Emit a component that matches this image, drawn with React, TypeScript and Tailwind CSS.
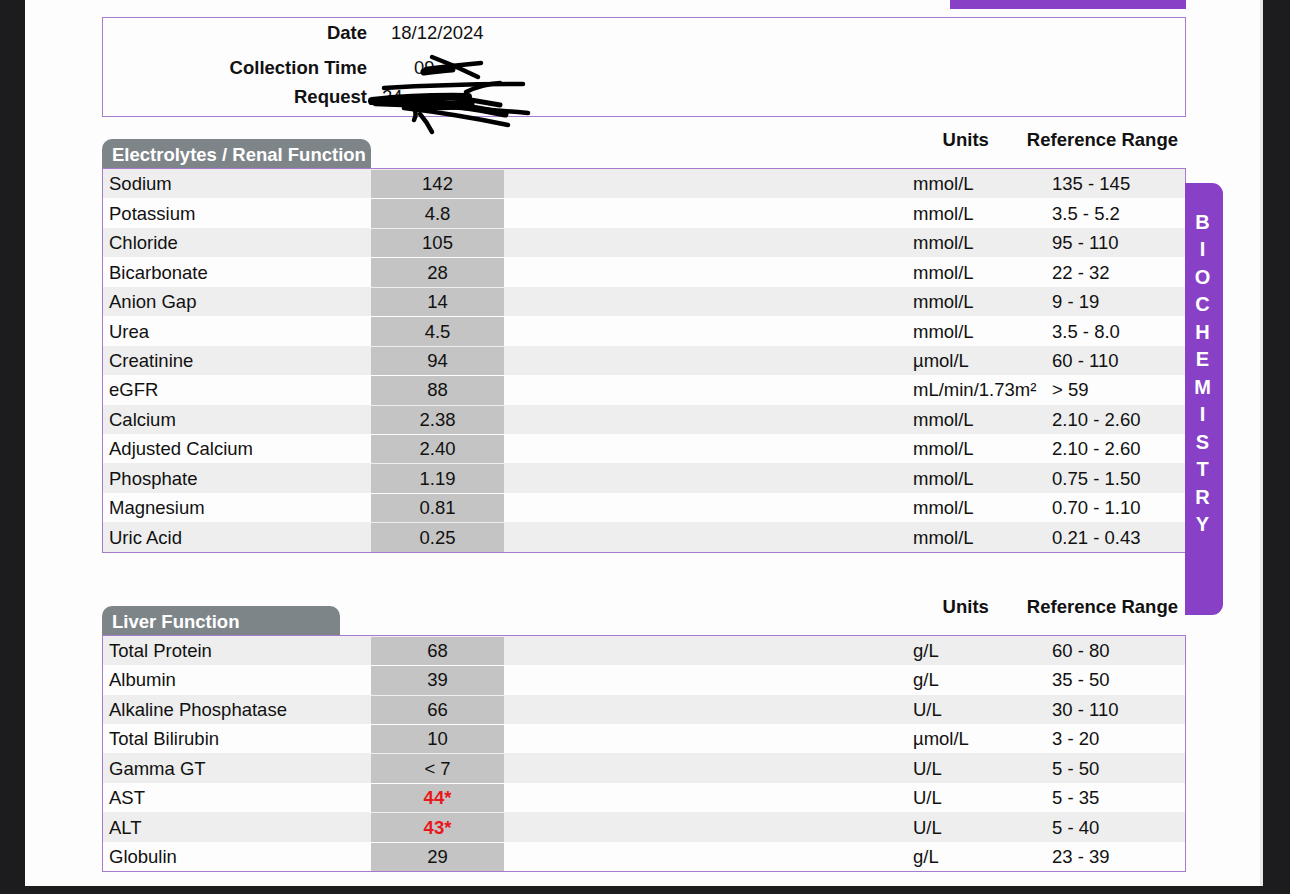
import * as React from 'react';

type Row = {
  name: string;
  value: string;
  units: React.ReactNode;
  range: string;
  flag?: boolean;
};

const electrolytes: Row[] = [
  { name: 'Sodium', value: '142', units: 'mmol/L', range: '135 - 145' },
  { name: 'Potassium', value: '4.8', units: 'mmol/L', range: '3.5 - 5.2' },
  { name: 'Chloride', value: '105', units: 'mmol/L', range: '95 - 110' },
  { name: 'Bicarbonate', value: '28', units: 'mmol/L', range: '22 - 32' },
  { name: 'Anion Gap', value: '14', units: 'mmol/L', range: '9 - 19' },
  { name: 'Urea', value: '4.5', units: 'mmol/L', range: '3.5 - 8.0' },
  { name: 'Creatinine', value: '94', units: 'µmol/L', range: '60 - 110' },
  { name: 'eGFR', value: '88', units: 'mL/min/1.73m²', range: '> 59' },
  { name: 'Calcium', value: '2.38', units: 'mmol/L', range: '2.10 - 2.60' },
  { name: 'Adjusted Calcium', value: '2.40', units: 'mmol/L', range: '2.10 - 2.60' },
  { name: 'Phosphate', value: '1.19', units: 'mmol/L', range: '0.75 - 1.50' },
  { name: 'Magnesium', value: '0.81', units: 'mmol/L', range: '0.70 - 1.10' },
  { name: 'Uric Acid', value: '0.25', units: 'mmol/L', range: '0.21 - 0.43' },
];

const liver: Row[] = [
  { name: 'Total Protein', value: '68', units: 'g/L', range: '60 - 80' },
  { name: 'Albumin', value: '39', units: 'g/L', range: '35 - 50' },
  { name: 'Alkaline Phosphatase', value: '66', units: 'U/L', range: '30 - 110' },
  { name: 'Total Bilirubin', value: '10', units: 'µmol/L', range: '3 - 20' },
  { name: 'Gamma GT', value: '< 7', units: 'U/L', range: '5 - 50' },
  { name: 'AST', value: '44*', units: 'U/L', range: '5 - 35', flag: true },
  { name: 'ALT', value: '43*', units: 'U/L', range: '5 - 40', flag: true },
  { name: 'Globulin', value: '29', units: 'g/L', range: '23 - 39' },
];

const SectionHeader = ({ title, tabWidth }: { title: string; tabWidth: string }) => (
  <div className="flex items-start">
    <div
      className={`${tabWidth} mt-[11px] h-[29px] rounded-t-[10px] bg-[#7e8589] pl-[10px] overflow-hidden whitespace-nowrap text-[18.5px] leading-[32px] font-bold text-white`}
    >
      {title}
    </div>
    <div className="flex-1" />
    <div className="flex pr-[8px] text-[18.5px] leading-[24px] font-bold text-[#111]">
      <span>Units</span>
      <span className="ml-[38px]">Reference Range</span>
    </div>
  </div>
);

const ResultsTable = ({ rows }: { rows: Row[] }) => (
  <div className="border border-[#a47ccb]">
    {rows.map((r, i) => (
      <div
        key={r.name}
        className={`flex h-[29.45px] items-center pt-[1px] text-[18.5px] text-[#111] ${i % 2 === 0 ? 'bg-[#eeeeee]' : 'bg-[#fdfdfd]'}`}
      >
        <div className="w-[268px] pl-[6px]">{r.name}</div>
        <div
          className={`flex h-full w-[133px] items-center justify-center bg-[#c4c4c4] ${r.flag ? 'font-bold text-[#e8191d]' : ''}`}
        >
          {r.value}
        </div>
        <div className="flex-1" />
        <div className="w-[139px] pl-[6px] whitespace-nowrap">{r.units}</div>
        <div className="w-[139px] pl-[6px]">{r.range}</div>
      </div>
    ))}
  </div>
);

// redaction marks over the collection time and request number
const Scribble = () => (
  <svg
    className="pointer-events-none absolute left-0 top-0"
    width="560"
    height="140"
    viewBox="0 0 560 140"
  >
    <g fill="none" stroke="#000" strokeLinecap="round" strokeWidth="4.5">
      <path d="M426 69 Q450 66 481 63" />
      <path d="M432 57 Q456 66 478 77" />
      <path d="M424 72 Q440 70 452 69" strokeWidth="7" />
      <path d="M384 88 Q450 84 523 84" />
      <path d="M372 101 Q420 96 468 97" strokeWidth="8" />
      <path d="M375 104 Q450 106 528 113" />
      <path d="M398 98 Q455 104 505 114" strokeWidth="7" />
      <path d="M404 108 Q455 114 508 125" />
      <path d="M420 114 Q427 122 432 132" />
      <path d="M466 92 Q482 84 500 83" />
      <path d="M390 100 Q430 109 470 104" strokeWidth="9" />
      <path d="M412 105 Q418 113 414 120" />
      <path d="M440 96 Q470 99 500 105" strokeWidth="5" />
    </g>
  </svg>
);

const InfoBox = () => (
  <div className="relative h-[100px] border border-[#a47ccb] text-[18.5px] leading-[24px] text-[#111]">
    <div className="flex pt-[3px]">
      <div className="w-[264px] text-right font-bold">Date</div>
      <div className="pl-[24px]">18/12/2024</div>
    </div>
    <div className="mt-[11px] flex">
      <div className="w-[264px] text-right font-bold">Collection Time</div>
      <div className="pl-[47px]">09</div>
    </div>
    <div className="mt-[5px] flex">
      <div className="w-[264px] text-right font-bold">Request</div>
      <div className="pl-[15px]">24</div>
    </div>
    <div className="absolute left-[-103px] top-[-18px]">
      <Scribble />
    </div>
  </div>
);

export default function App() {
  return (
    <div
      className="flex h-[894px] w-[1290px] flex-col bg-[#1c1c1e] overflow-hidden"
      style={{ fontFamily: '"Liberation Sans", Arial, sans-serif' }}
    >
      <div className="flex h-[886px]">
        <div className="w-[25px] shrink-0" />
        <div className="flex w-[1235px] bg-[#fdfdfd] pl-[77px]">
          <div className="w-[1084px] shrink-0">
            <div className="ml-auto h-[9px] w-[236px] bg-[#8740c6]" />
            <div className="mt-[8px]">
              <InfoBox />
            </div>
            <div className="mt-[11px]">
              <SectionHeader title="Electrolytes / Renal Function" tabWidth="w-[269px]" />
            </div>
            <ResultsTable rows={electrolytes} />
            <div className="mt-[42px]">
              <SectionHeader title="Liver Function" tabWidth="w-[238px]" />
            </div>
            <ResultsTable rows={liver} />
          </div>
          <div className="-ml-[1px] mt-[183px] flex h-[432px] w-[38px] shrink-0 flex-col items-center rounded-r-[11px] bg-[#8740c6] pr-[3px] pt-[26px] text-[20px] leading-[27.45px] font-bold text-white">
            {'BIOCHEMISTRY'.split('').map((c, i) => (
              <span key={i}>{c}</span>
            ))}
          </div>
        </div>
        <div className="w-[3px] bg-[#e8e8e8]" />
      </div>
    </div>
  );
}
